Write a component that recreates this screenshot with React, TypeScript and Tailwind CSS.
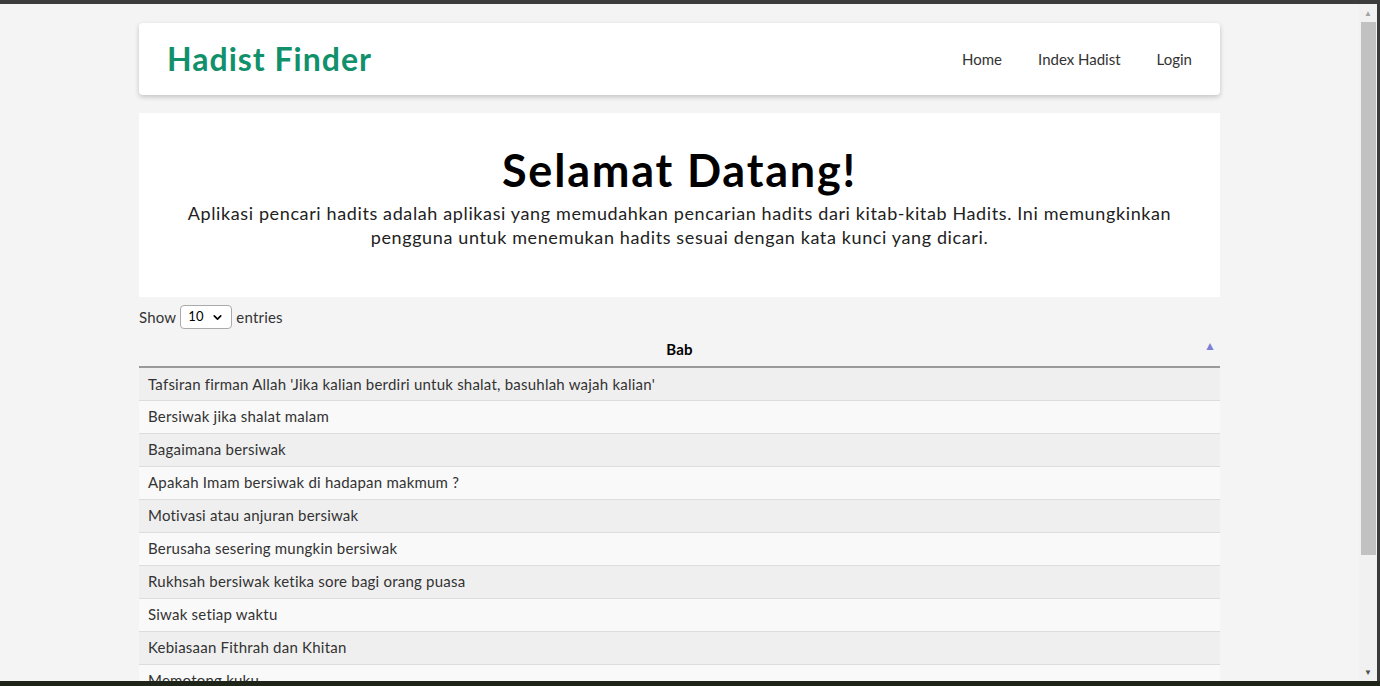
import { ChevronDown } from "lucide-react";

const rows = [
  "Tafsiran firman Allah 'Jika kalian berdiri untuk shalat, basuhlah wajah kalian'",
  "Bersiwak jika shalat malam",
  "Bagaimana bersiwak",
  "Apakah Imam bersiwak di hadapan makmum ?",
  "Motivasi atau anjuran bersiwak",
  "Berusaha sesering mungkin bersiwak",
  "Rukhsah bersiwak ketika sore bagi orang puasa",
  "Siwak setiap waktu",
  "Kebiasaan Fithrah dan Khitan",
  "Memotong kuku",
];

function Navbar() {
  return (
    <nav className="flex h-[72px] items-center justify-between rounded bg-white pl-7 pr-7 shadow-[0_2px_5px_rgba(0,0,0,0.2)]">
      <h1 className="text-[32px] font-bold tracking-[1px] text-[#11906c]">Hadist Finder</h1>
      <ul className="flex items-center gap-9 text-[15px] text-[#333]">
        <li>Home</li>
        <li>Index Hadist</li>
        <li>Login</li>
      </ul>
    </nav>
  );
}

function Hero() {
  return (
    <section className="mt-[18px] flex h-[184px] flex-col items-center bg-white px-12 pt-[30px] text-center">
      <h2 className="text-[45px] font-bold leading-[54px] tracking-[1.8px] text-black">Selamat Datang!</h2>
      <p className="mt-[4px] text-[18px] leading-[24px] tracking-[0.62px] text-[#222]">
        Aplikasi pencari hadits adalah aplikasi yang memudahkan pencarian hadits dari kitab-kitab Hadits. Ini memungkinkan
        pengguna untuk menemukan hadits sesuai dengan kata kunci yang dicari.
      </p>
    </section>
  );
}

function HadistTable() {
  return (
    <div className="mt-2">
      <div className="flex items-center gap-1 text-[15px] tracking-[0.2px] text-[#333]">
        <span>Show</span>
        <div className="flex h-[24px] w-[52px] items-center justify-between rounded border border-[#aaa] bg-white px-[7px] text-[13px] text-black">
          <span>10</span>
          <ChevronDown size={13} strokeWidth={3} />
        </div>
        <span>entries</span>
      </div>
      <table className="mt-[4px] w-full border-collapse text-[15px] tracking-[0.22px]">
        <thead>
          <tr className="border-b-2 border-[#999]">
            <th className="relative h-[34px] font-bold text-black">
              Bab
              <span className="absolute right-[4px] top-[4px] text-[12px] text-[#7d7fd6]">▲</span>
            </th>
          </tr>
        </thead>
        <tbody>
          {rows.map((r, i) => (
            <tr key={i} className={`h-[33px] border-b border-[#ddd] ${i % 2 === 0 ? "bg-[#efefef]" : "bg-[#f9f9f9]"}`}>
              <td className="px-[9px] text-[#333]">{r}</td>
            </tr>
          ))}
        </tbody>
      </table>
    </div>
  );
}

export default function App() {
  return (
    <div className="flex h-screen flex-col overflow-hidden bg-[#3a3a3a] font-['Lato','Noto_Sans',sans-serif]">
      <div className="h-[4px] shrink-0 bg-[#3c3c3c]" />
      <div className="flex min-h-0 flex-1">
        <main className="min-w-0 flex-1 overflow-hidden bg-[#f4f4f4]">
          <div className="mx-auto w-[1081px] pt-[19px]">
            <Navbar />
            <Hero />
            <HadistTable />
          </div>
        </main>
        <div className="flex w-[18px] shrink-0 flex-col items-center bg-[#f1f1f1]">
          <div className="flex h-[18px] items-center justify-center text-[8px] text-[#a3a3a3]">▲</div>
          <div className="h-[533px] w-[15px] bg-[#c1c1c1]" />
          <div className="flex-1" />
          <div className="flex h-[18px] items-center justify-center text-[8px] text-[#505050]">▼</div>
        </div>
        <div className="w-[3px] shrink-0 bg-[#3a3a3a]" />
      </div>
      <div className="h-[5px] shrink-0 bg-[#1f2418]" />
    </div>
  );
}
